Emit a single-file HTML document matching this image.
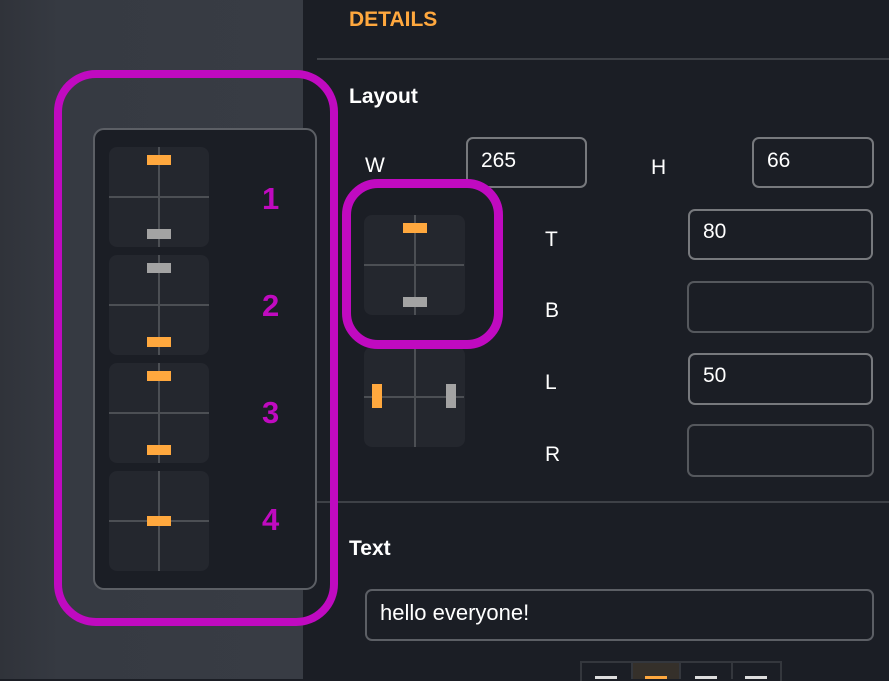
<!DOCTYPE html>
<html><head><meta charset="utf-8"><style>
*{margin:0;padding:0;box-sizing:border-box}
body{width:889px;height:679px;overflow:hidden;background:#1b1e25;font-family:"Liberation Sans",sans-serif;position:relative;color:#fff}
.a{position:absolute}
.left{left:0;top:0;width:303px;height:679px;background:linear-gradient(90deg,#30333a 0,#363a42 60px,#383c44 303px)}
.card{position:absolute;width:100px;height:100px;background:#24272e;border-radius:8px;overflow:hidden}
.card .v{position:absolute;left:49px;top:0;width:2px;height:100px;background:#4c4f54}
.card .h{position:absolute;top:49px;left:0;height:2px;width:100px;background:#4c4f54}
.bar{position:absolute;width:24px;height:10px}
.o{background:#ffa83e}.g{background:#a3a3a3}
.num{position:absolute;color:#c00ac0;font-weight:bold;font-size:31px}
.inp{position:absolute;border:2px solid #77797d;border-radius:7px;font-size:21px;padding:9px 0 0 13px;color:#fff}
.lbl{position:absolute;font-size:21px;color:#fff}
.hd{position:absolute;font-size:21px;font-weight:bold;color:#fff}
.ring{z-index:5}
</style></head><body>
<div class="a left"></div>
<div class="a ring" style="left:54px;top:70px;width:284px;height:556px;border:8px solid #c00ac0;border-radius:42px"></div>
<div class="a" style="left:93px;top:128px;width:224px;height:462px;border:2px solid #5c5f65;border-radius:11px;background:#1b1e25"></div>

<div class="card" style="left:109px;top:147px"><div class="v"></div><div class="h"></div><div class="bar o" style="left:38px;top:8px"></div><div class="bar g" style="left:38px;top:82px"></div></div>
<div class="card" style="left:109px;top:255px"><div class="v"></div><div class="h"></div><div class="bar g" style="left:38px;top:8px"></div><div class="bar o" style="left:38px;top:82px"></div></div>
<div class="card" style="left:109px;top:363px"><div class="v"></div><div class="h"></div><div class="bar o" style="left:38px;top:8px"></div><div class="bar o" style="left:38px;top:82px"></div></div>
<div class="card" style="left:109px;top:471px"><div class="v"></div><div class="h"></div><div class="bar o" style="left:38px;top:45px"></div></div>
<div class="num" style="left:262px;top:181px">1</div>
<div class="num" style="left:262px;top:288px">2</div>
<div class="num" style="left:262px;top:395px">3</div>
<div class="num" style="left:262px;top:502px">4</div>

<div class="a" style="left:349px;top:8px;color:#ffa83e;font-weight:bold;font-size:21px">DETAILS</div>
<div class="a" style="left:317px;top:58px;width:572px;height:2px;background:#3e4147"></div>
<div class="hd" style="left:349px;top:85px">Layout</div>
<div class="lbl" style="left:365px;top:154px">W</div>
<div class="inp" style="left:466px;top:137px;width:121px;height:51px;padding-top:10px">265</div>
<div class="lbl" style="left:651px;top:156px">H</div>
<div class="inp" style="left:752px;top:137px;width:122px;height:51px;padding-top:10px">66</div>

<div class="card" style="left:364px;top:215px;width:101px"><div class="v" style="left:50px"></div><div class="h"></div><div class="bar o" style="left:39px;top:8px"></div><div class="bar g" style="left:39px;top:82px"></div></div>
<div class="a ring" style="left:342px;top:179px;width:161px;height:170px;border:9px solid #c00ac0;border-radius:36px"></div>
<div class="card" style="left:364px;top:347px;width:101px"><div class="v" style="left:50px"></div><div class="h"></div><div class="bar o" style="left:8px;top:37px;width:10px;height:24px"></div><div class="bar g" style="left:82px;top:37px;width:10px;height:24px"></div></div>

<div class="lbl" style="left:545px;top:228px">T</div>
<div class="inp" style="left:688px;top:209px;width:185px;height:51px">80</div>
<div class="lbl" style="left:545px;top:299px">B</div>
<div class="inp" style="left:687px;top:281px;width:187px;height:52px;border-color:#55585d"></div>
<div class="lbl" style="left:545px;top:371px">L</div>
<div class="inp" style="left:688px;top:353px;width:185px;height:52px">50</div>
<div class="lbl" style="left:545px;top:443px">R</div>
<div class="inp" style="left:687px;top:424px;width:187px;height:53px;border-color:#55585d"></div>

<div class="a" style="left:317px;top:501px;width:572px;height:2px;background:#3e4147"></div>
<div class="hd" style="left:349px;top:537px">Text</div>
<div class="inp" style="left:365px;top:589px;width:509px;height:52px;border-color:#5c5f65;font-size:22px">hello everyone!</div>

<div class="a" style="left:580px;top:661px;width:202px;height:20px;border:2px solid #34373d;border-bottom:none;background:#1b1e25"></div>
<div class="a" style="left:631px;top:663px;width:50px;height:16px;background:#35302a;border-left:2px solid #34373d;border-right:2px solid #34373d"></div>
<div class="a" style="left:731px;top:663px;width:2px;height:16px;background:#34373d"></div>
<div class="a" style="left:595px;top:676px;width:22px;height:3px;background:#ddd"></div>
<div class="a" style="left:645px;top:676px;width:22px;height:3px;background:#ffa83e"></div>
<div class="a" style="left:695px;top:676px;width:22px;height:3px;background:#ddd"></div>
<div class="a" style="left:745px;top:676px;width:22px;height:3px;background:#ddd"></div>
</body></html>
